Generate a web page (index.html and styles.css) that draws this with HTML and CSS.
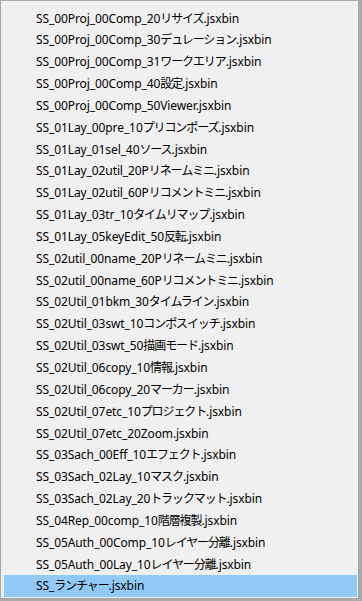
FILE: index.html
```html
<!DOCTYPE html>
<html lang="ja">
<head>
<meta charset="utf-8">
<title>Menu</title>
<link rel="stylesheet" href="styles.css">
</head>
<body>
<div class="menu">
  <ul class="list">
    <li class="item">SS_00Proj_00Comp_20<span class="jp">リサイズ</span>.jsxbin</li>
    <li class="item">SS_00Proj_00Comp_30<span class="jp">デュレーション</span>.jsxbin</li>
    <li class="item">SS_00Proj_00Comp_31<span class="jp">ワークエリア</span>.jsxbin</li>
    <li class="item">SS_00Proj_00Comp_40<span class="jp">設定</span>.jsxbin</li>
    <li class="item">SS_00Proj_00Comp_50Viewer.jsxbin</li>
    <li class="item">SS_01Lay_00pre_10<span class="jp">プリコンポーズ</span>.jsxbin</li>
    <li class="item">SS_01Lay_01sel_40<span class="jp">ソース</span>.jsxbin</li>
    <li class="item">SS_01Lay_02util_20P<span class="jp">リネームミニ</span>.jsxbin</li>
    <li class="item">SS_01Lay_02util_60P<span class="jp">リコメントミニ</span>.jsxbin</li>
    <li class="item">SS_01Lay_03tr_10<span class="jp">タイムリマップ</span>.jsxbin</li>
    <li class="item">SS_01Lay_05keyEdit_50<span class="jp">反転</span>.jsxbin</li>
    <li class="item">SS_02util_00name_20P<span class="jp">リネームミニ</span>.jsxbin</li>
    <li class="item">SS_02util_00name_60P<span class="jp">リコメントミニ</span>.jsxbin</li>
    <li class="item">SS_02Util_01bkm_30<span class="jp">タイムライン</span>.jsxbin</li>
    <li class="item">SS_02Util_03swt_10<span class="jp">コンポスイッチ</span>.jsxbin</li>
    <li class="item">SS_02Util_03swt_50<span class="jp">描画モード</span>.jsxbin</li>
    <li class="item">SS_02Util_06copy_10<span class="jp">情報</span>.jsxbin</li>
    <li class="item">SS_02Util_06copy_20<span class="jp">マーカー</span>.jsxbin</li>
    <li class="item">SS_02Util_07etc_10<span class="jp">プロジェクト</span>.jsxbin</li>
    <li class="item">SS_02Util_07etc_20Zoom.jsxbin</li>
    <li class="item">SS_03Sach_00Eff_10<span class="jp">エフェクト</span>.jsxbin</li>
    <li class="item">SS_03Sach_02Lay_10<span class="jp">マスク</span>.jsxbin</li>
    <li class="item">SS_03Sach_02Lay_20<span class="jp">トラックマット</span>.jsxbin</li>
    <li class="item">SS_04Rep_00comp_10<span class="jp">階層複製</span>.jsxbin</li>
    <li class="item">SS_05Auth_00Comp_10<span class="jp">レイヤー分離</span>.jsxbin</li>
    <li class="item">SS_05Auth_00Lay_10<span class="jp">レイヤー分離</span>.jsxbin</li>
    <li class="item item-selected">SS_<span class="jp">ランチャー</span>.jsxbin</li>
  </ul>
</div>
</body>
</html>
```

FILE: styles.css
```css
html, body {
  margin: 0;
  padding: 0;
}
body {
  width: 362px;
  height: 601px;
  background: #a8a8a8;
  overflow: hidden;
  font-family: "Noto Sans", "Noto Sans CJK JP", sans-serif;
  font-size: 12px;
  color: #000;
}
.menu {
  box-sizing: border-box;
  margin: 1px 4px 0 1px;
  height: 597px;
  background: #f0f0f0;
  padding: 6.5px 1px 0 3px;
}
.list {
  list-style: none;
  margin: 0;
  padding: 0;
}
.item {
  height: 21.85px;
  line-height: 21.85px;
  padding-left: 32px;
  white-space: nowrap;
  letter-spacing: -0.1px;
}
.jp {
  letter-spacing: -1.1px;
}
.item-selected {
  background: #91c9f7;
}
```
